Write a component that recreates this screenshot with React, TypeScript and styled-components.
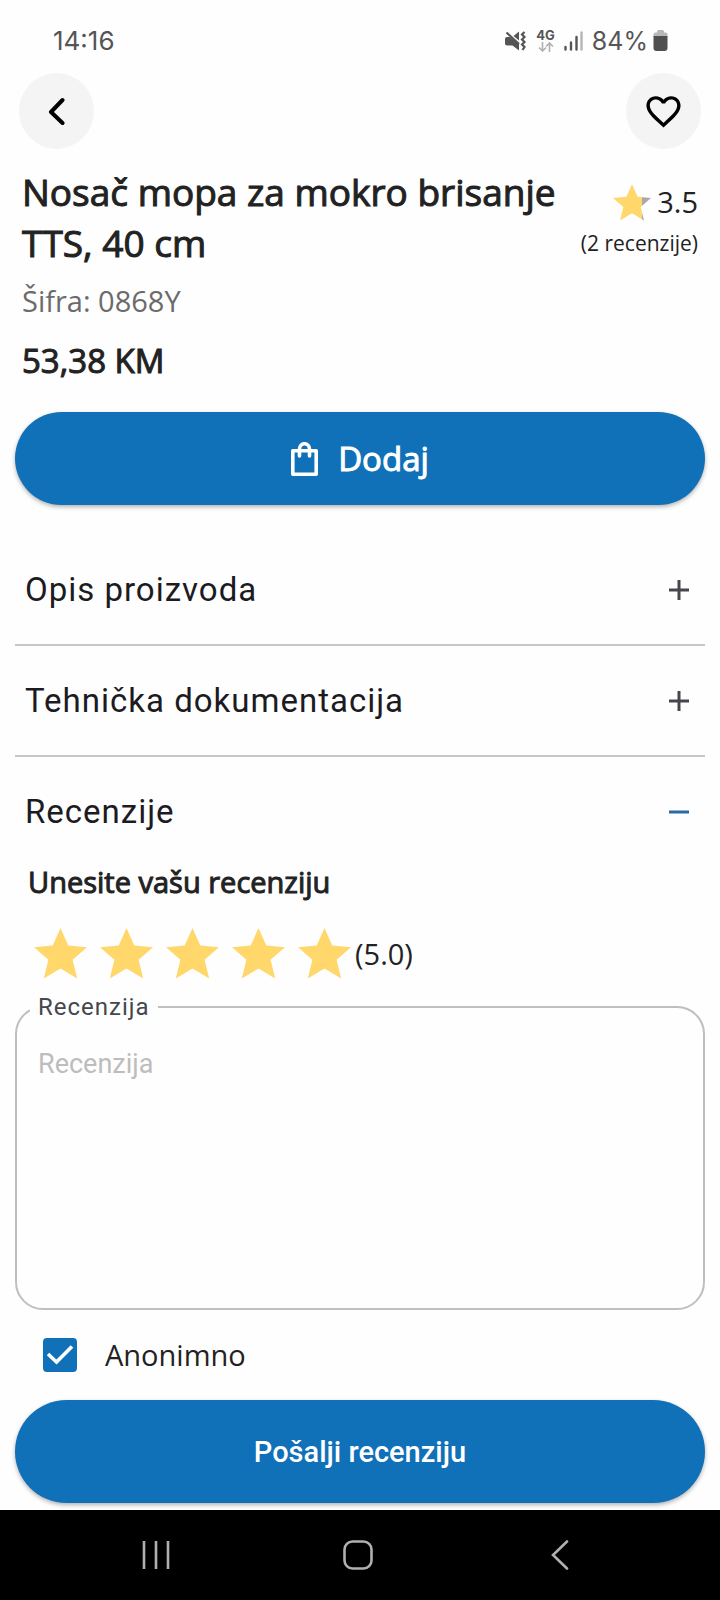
import React, { useState } from 'react';
import styled, { createGlobalStyle } from 'styled-components';

const blue = '#1070b8';
const ink = '#222222';
const openSans = '"Open Sans", "Noto Sans", sans-serif';
const roboto = 'Roboto, "Liberation Sans", sans-serif';

const GlobalStyle = createGlobalStyle`
  *, *::before, *::after { box-sizing: border-box; }
  body { margin: 0; background: #fefefe; color: ${ink}; font-family: ${openSans}; }
  button, textarea, input { font: inherit; color: inherit; margin: 0; }
  button { border: 0; background: none; padding: 0; cursor: pointer; }
  svg { display: block; flex: none; }
  h1, h2, p { margin: 0; }
`;

const Screen = styled.div`
  display: flex;
  flex-direction: column;
  min-height: 100vh;
`;

const StatusBar = styled.header`
  display: flex;
  align-items: center;
  justify-content: space-between;
  height: 73px;
  padding: 8px 52px 0 53px;
  color: #555555;
  font-family: Inter, ${roboto};
  font-size: 26px;
`;

const StatusIcons = styled.div`
  display: flex;
  align-items: center;
  gap: 9px;
`;

const Network = styled.div`
  display: flex;
  flex-direction: column;
  align-items: center;
  font-size: 13px;
  font-weight: 700;
  line-height: 13px;
`;

const Battery = styled.div`
  display: flex;
  align-items: center;
  gap: 5px;
  font-size: 25px;
`;

const Toolbar = styled.div`
  display: flex;
  justify-content: space-between;
  padding: 0 19px;
`;

const RoundButton = styled.button`
  display: grid;
  place-items: center;
  width: 75px;
  height: 76px;
  border-radius: 50%;
  background: #f4f4f4;
  color: #000000;
`;

const Main = styled.main`
  flex: 1;
  padding: 17px 15px 7px;
`;

const Summary = styled.section`
  display: flex;
  justify-content: space-between;
  padding: 0 7px;
`;

const Title = styled.h1`
  max-width: 550px;
  font-size: 37px;
  font-weight: 400;
  line-height: 51px;
  -webkit-text-stroke: 1px currentColor;
`;

const Code = styled.p`
  padding: 13px 7px 0;
  color: #6b6b6b;
  font-size: 29px;
  line-height: 40px;
`;

const Price = styled.p`
  padding: 17px 7px 0;
  font-size: 33px;
  font-weight: 400;
  line-height: 46px;
  -webkit-text-stroke: 1px currentColor;
`;

const Rating = styled.div`
  display: flex;
  flex-direction: column;
  align-items: flex-end;
  gap: 5px;
  padding-top: 16px;
  font-size: 21px;
  line-height: 32px;
  white-space: nowrap;
`;

const Score = styled.div`
  display: flex;
  align-items: center;
  gap: 6px;
  height: 40px;
  font-size: 29px;
`;

const PillButton = styled.button<{ $family: string; $size: number; $height: number }>`
  display: flex;
  align-items: center;
  justify-content: center;
  gap: 20px;
  width: 100%;
  height: ${(p) => p.$height}px;
  border-radius: 52px;
  background: ${blue};
  box-shadow: 0 2px 4px rgba(0, 0, 0, 0.3);
  color: #ffffff;
  font-family: ${(p) => p.$family};
  font-size: ${(p) => p.$size}px;
  font-weight: 500;
`;

const AddLabel = styled.span`
  font-weight: 400;
  -webkit-text-stroke: 1px currentColor;
`;

const Actions = styled.div`
  padding: 28px 0 30px;
`;

const SectionHeader = styled.button<{ $open: boolean }>`
  display: flex;
  align-items: center;
  justify-content: space-between;
  width: 100%;
  padding: 35px 16px 34px 10px;
  border-bottom: ${(p) => (p.$open ? '0' : '2px solid #c6c6c8')};
  color: #1c1b1f;
  font-family: ${roboto};
  font-size: 33px;
  letter-spacing: 1px;
  line-height: 40px;
  text-align: left;

  svg { color: ${(p) => (p.$open ? '#2a6aa5' : '#46474c')}; }
`;

const FormTitle = styled.h2`
  padding-left: 13px;
  font-size: 29px;
  font-weight: 400;
  line-height: 32px;
  -webkit-text-stroke: 1px currentColor;
`;

const StarRow = styled.div`
  display: flex;
  align-items: center;
  padding: 30px 0 14px 19px;
  font-size: 29px;
  line-height: 50px;
`;

const Stars = styled.div`
  display: flex;
  gap: 13px;
  margin-right: 4px;
`;

const StarOption = styled.label`
  display: grid;
  cursor: pointer;

  > * { grid-area: 1 / 1; }
`;

const StarInput = styled.input`
  width: 100%;
  height: 100%;
  opacity: 0;
  cursor: pointer;
`;

const Field = styled.fieldset`
  min-width: 0;
  margin: 0;
  padding: 0 13px;
  border: 2px solid #bfbfbf;
  border-radius: 28px;
`;

const Legend = styled.legend`
  padding: 0 8px;
  color: #46474c;
  font-family: ${roboto};
  font-size: 24px;
  letter-spacing: 1px;
  line-height: 28px;
`;

const Comment = styled.textarea`
  display: block;
  width: 100%;
  height: 287px;
  padding: 27px 8px;
  border: 0;
  outline: 0;
  resize: none;
  background: transparent;
  font-family: ${roboto};
  font-size: 27px;
  line-height: 32px;

  &::placeholder { color: #bdbdbd; opacity: 1; }
`;

const CheckRow = styled.label`
  display: flex;
  align-items: center;
  gap: 28px;
  padding: 28px;
  font-size: 29px;
  line-height: 34px;
  cursor: pointer;
`;

const CheckMark = styled.span`
  display: grid;

  > * { grid-area: 1 / 1; }
  svg { pointer-events: none; }
`;

const CheckInput = styled.input`
  appearance: none;
  width: 34px;
  height: 34px;
  border: 3px solid ${blue};
  border-radius: 4px;

  &:checked { background: ${blue}; }
`;

const NavBar = styled.nav`
  display: grid;
  grid-template-columns: repeat(3, 202px);
  justify-content: center;
  height: 90px;
  padding-right: 5px;
  background: #000000;
  color: #b0b0b0;
`;

const NavButton = styled.button`
  display: grid;
  place-items: center;
`;

const starPoints = '26.5,0 34.3,17.6 53,19.2 38.6,31.8 43.2,50.5 26.5,40.6 9.8,50.5 14.4,31.8 0,19.2 18.7,17.6';

const Star = ({ width, height, fill = 1 }: { width: number; height: number; fill?: number }) => (
  <svg width={width} height={height} viewBox="0 0 53 51" aria-hidden="true">
    <defs>
      <linearGradient id={`fill-${width}`}>
        <stop offset={fill} stopColor="#ffd76b" />
        <stop offset={fill} stopColor="#a9a9ab" />
      </linearGradient>
    </defs>
    <polygon points={starPoints} fill={`url(#fill-${width})`} />
  </svg>
);

const EmptyStar = () => (
  <svg width="53" height="51" viewBox="0 0 53 51" aria-hidden="true">
    <polygon points={starPoints} fill="#a9a9ab" />
  </svg>
);

const Toggle = ({ open }: { open: boolean }) => (
  <svg width="20" height="20" viewBox="0 0 20 20" stroke="currentColor" strokeWidth="3" aria-hidden="true">
    <path d={open ? 'M0 10H20' : 'M0 10H20M10 0V20'} />
  </svg>
);

export default function App() {
  const [open, setOpen] = useState<Record<string, boolean>>({ Recenzije: true });
  const [rating, setRating] = useState(5);
  const [anonymous, setAnonymous] = useState(true);
  const [liked, setLiked] = useState(false);

  const header = (name: string) => (
    <SectionHeader
      type="button"
      $open={!!open[name]}
      aria-expanded={!!open[name]}
      onClick={() => setOpen({ ...open, [name]: !open[name] })}
    >
      {name}
      <Toggle open={!!open[name]} />
    </SectionHeader>
  );

  return (
    <Screen>
      <GlobalStyle />
      <StatusBar>
        <span>14:16</span>
        <StatusIcons>
          <svg width="22" height="20" viewBox="0 0 22 20" aria-hidden="true">
            <path d="M0 8Q0 6 2 6H5L14 13V19.5L7.5 14.500H2Q0 14.500 0 12.500ZM8.500 5L14 0.5V9.5Z" fill="#555" />
            <path d="M1.5 1.5L14 13" stroke="#555" strokeWidth="2.2" />
            <path d="M19.5 1L17 3.5L19.5 6L17 8.5L19.5 11L17 13.5L19.5 16L17.5 19" fill="none" stroke="#555" strokeWidth="2.2" />
          </svg>
          <Network>
            4G
            <svg width="16" height="10" viewBox="0 0 16 10" fill="none" stroke="#b0b0b0" strokeWidth="1.6" aria-hidden="true">
              <path d="M4.500 0V9M1 5.500L4.500 9L8 5.500M11.500 10V1M8 4.500L11.500 1L15 4.500" />
            </svg>
          </Network>
          <svg width="19" height="20" viewBox="0 0 19 20" strokeWidth="2.4" strokeLinecap="round" aria-hidden="true">
            <path d="M1.500 16V18.500M7 11.500V18.500M12.500 6V18.500" stroke="#555" />
            <path d="M17.500 1.500V18.500" stroke="#b5b5b5" />
          </svg>
          <Battery>
            84%
            <svg width="15" height="21" viewBox="0 0 15 21" aria-hidden="true">
              <path d="M0.500 7V4.500Q0.500 2.500 2.500 2.500H4V1.500Q4 0 5.500 0H9.500Q11 0 11 1.500V2.500H12.500Q14.500 2.500 14.500 4.500V7Z" fill="#b8b8b8" />
              <path d="M0.500 6H14.500V18Q14.500 21 11.500 21H3.500Q0.500 21 0.500 18Z" fill="#505050" />
            </svg>
          </Battery>
        </StatusIcons>
      </StatusBar>

      <Toolbar>
        <RoundButton type="button" aria-label="Nazad">
          <svg width="18" height="28" viewBox="0 0 18 28" fill="none" stroke="currentColor" strokeWidth="4" strokeLinecap="round" strokeLinejoin="round" aria-hidden="true">
            <path d="M14.500 3L3 15L14.500 26" />
          </svg>
        </RoundButton>
        <RoundButton type="button" aria-label="Omiljeno" aria-pressed={liked} onClick={() => setLiked(!liked)}>
          <svg width="41" height="41" viewBox="0 0 24 24" fill="currentColor" aria-hidden="true">
            {liked ? (
              <path d="M12 21.350l-1.450-1.320C5.400 15.360 2 12.280 2 8.500 2 5.420 4.420 3 7.500 3c1.740 0 3.410.81 4.500 2.090C13.090 3.810 14.760 3 16.500 3 19.580 3 22 5.420 22 8.500c0 3.780-3.400 6.860-8.550 11.540L12 21.350z" />
            ) : (
              <path d="M16.500 3c-1.740 0-3.410.81-4.500 2.090C10.910 3.810 9.240 3 7.500 3 4.420 3 2 5.420 2 8.500c0 3.780 3.400 6.860 8.550 11.540L12 21.350l1.450-1.320C18.600 15.360 22 12.280 22 8.500 22 5.420 19.580 3 16.500 3zm-4.400 15.550l-.1.1-.1-.1C7.140 14.240 4 11.390 4 8.500 4 6.500 5.500 5 7.500 5c1.540 0 3.040.99 3.570 2.360h1.870C13.460 5.990 14.960 5 16.500 5c2 0 3.500 1.500 3.500 3.500 0 2.890-3.140 5.740-7.900 10.050z" />
            )}
          </svg>
        </RoundButton>
      </Toolbar>

      <Main>
        <Summary>
          <Title>Nosač mopa za mokro brisanje TTS, 40 cm</Title>
          <Rating>
            <Score>
              <Star width={38} height={37} fill={0.77} />
              3.5
            </Score>
            <span>(2 recenzije)</span>
          </Rating>
        </Summary>
        <Code>Šifra: 0868Y</Code>
        <Price>53,38 KM</Price>

        <Actions>
          <PillButton type="button" $family={openSans} $size={33} $height={93}>
            <svg width="27" height="34" viewBox="0 0 27 34" fill="none" stroke="currentColor" strokeWidth="3.600" strokeLinecap="round" strokeLinejoin="round" aria-hidden="true">
              <path d="M1.800 8.700H25.200V32.200H1.800Z" />
              <path d="M8.500 14V7A5 5.300 0 0 1 18.500 7V14" />
            </svg>
            <AddLabel>Dodaj</AddLabel>
          </PillButton>
        </Actions>

        {header('Opis proizvoda')}
        {header('Tehnička dokumentacija')}
        {header('Recenzije')}

        {open.Recenzije && (
          <form onSubmit={(e) => e.preventDefault()}>
            <FormTitle>Unesite vašu recenziju</FormTitle>
            <StarRow>
              <Stars role="radiogroup" aria-label="Ocjena">
                {[1, 2, 3, 4, 5].map((n) => (
                  <StarOption key={n}>
                    {n <= rating ? <Star width={53} height={51} /> : <EmptyStar />}
                    <StarInput
                      type="radio"
                      name="rating"
                      aria-label={String(n)}
                      checked={rating === n}
                      onChange={() => setRating(n)}
                    />
                  </StarOption>
                ))}
              </Stars>
              ({rating.toFixed(1)})
            </StarRow>
            <Field>
              <Legend>
                <label htmlFor="comment">Recenzija</label>
              </Legend>
              <Comment id="comment" placeholder="Recenzija" />
            </Field>
            <CheckRow>
              <CheckMark>
                <CheckInput
                  type="checkbox"
                  checked={anonymous}
                  onChange={(e) => setAnonymous(e.target.checked)}
                />
                {anonymous && (
                  <svg width="34" height="34" viewBox="0 0 34 34" fill="none" stroke="#ffffff" strokeWidth="3.600" aria-hidden="true">
                    <path d="M5 16L13.500 24L29 8.500" />
                  </svg>
                )}
              </CheckMark>
              Anonimno
            </CheckRow>
            <PillButton type="submit" $family={roboto} $size={29} $height={103}>
              Pošalji recenziju
            </PillButton>
          </form>
        )}
      </Main>

      <NavBar>
        <NavButton type="button" aria-label="Nedavne aplikacije">
          <svg width="28" height="30" viewBox="0 0 28 30" stroke="currentColor" strokeWidth="2.600" aria-hidden="true">
            <path d="M2 1V29M14 1V29M26 1V29" />
          </svg>
        </NavButton>
        <NavButton type="button" aria-label="Početna">
          <svg width="30" height="30" viewBox="0 0 30 30" fill="none" stroke="currentColor" strokeWidth="2.600" aria-hidden="true">
            <rect x="1.500" y="1.500" width="27" height="27" rx="8" />
          </svg>
        </NavButton>
        <NavButton type="button" aria-label="Natrag">
          <svg width="18" height="30" viewBox="0 0 18 30" fill="none" stroke="currentColor" strokeWidth="2.600" strokeLinecap="round" aria-hidden="true">
            <path d="M16 1.500L2 15L16 28.500" />
          </svg>
        </NavButton>
      </NavBar>
    </Screen>
  );
}
